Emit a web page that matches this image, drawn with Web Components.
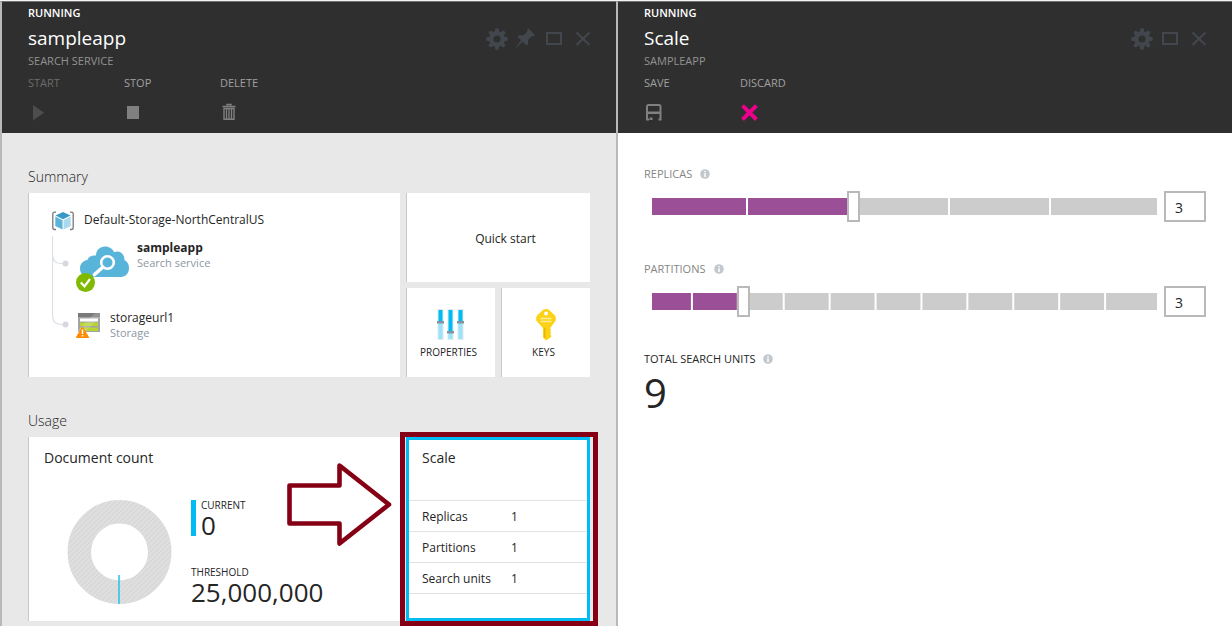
<!DOCTYPE html>
<html lang="en">
<head>
<meta charset="utf-8">
<title>sampleapp - Scale</title>
<style>
  body {
    margin: 0;
    font-family: "Open Sans", "Noto Sans", sans-serif;
    font-size: 12px;
    line-height: 16px;
    color: #252525;
    background: #fff;
  }
</style>
</head>
<body>
<portal-app></portal-app>

<template id="t-app">
  <style>
    :host { display: grid; grid-template-columns: minmax(0, 1fr) minmax(0, 1fr); min-height: 100vh; box-sizing: border-box; border-top: 1px solid #f4f4f4; }
  </style>
  <portal-blade tone="grey">
    <blade-header slot="header" status="Running" heading="sampleapp" subtitle="Search service" tools="gear pin square close">
      <blade-command label="Start" icon="play" disabled></blade-command>
      <blade-command label="Stop" icon="stop"></blade-command>
      <blade-command label="Delete" icon="trash"></blade-command>
    </blade-header>
    <tile-section heading="Summary">
      <portal-tile class="tall"><resource-tree></resource-tree></portal-tile>
      <portal-tile class="wide"><action-tile label="Quick start"></action-tile></portal-tile>
      <portal-tile><action-tile label="Properties" icon="sliders"></action-tile></portal-tile>
      <portal-tile><action-tile label="Keys" icon="key"></action-tile></portal-tile>
    </tile-section>
    <tile-section heading="Usage">
      <portal-tile class="tall"><document-count></document-count></portal-tile>
      <portal-tile class="wide tall" selected><scale-summary></scale-summary></portal-tile>
    </tile-section>
  </portal-blade>
  <portal-blade>
    <blade-header slot="header" status="Running" heading="Scale" subtitle="sampleapp" tools="gear square close">
      <blade-command label="Save" icon="save"></blade-command>
      <blade-command label="Discard" icon="discard"></blade-command>
    </blade-header>
    <scale-form></scale-form>
  </portal-blade>
</template>

<template id="t-blade">
  <style>
    :host { display: flex; flex-direction: column; border-left: 2px solid #b9b9b9; border-top: 1px solid #6c7370; background: #fff; }
    :host([tone="grey"]) { background: #e8e8e8; }
    .body { padding: 0 26px 5px; }
  </style>
  <slot name="header"></slot>
  <div class="body"><slot></slot></div>
</template>

<template id="t-header">
  <style>
    :host { display: block; background: #2f2f2f; padding: 3px 23px 10px 26px; font-size: 11px; text-transform: uppercase; }
    .status { color: #fff; font-weight: 600; }
    .row { display: flex; align-items: center; margin: 3px 0 1px; }
    h1 { flex: 1; margin: 0; color: #fff; font-size: 19px; line-height: 28px; font-weight: 400; text-transform: none; }
    .tools { display: flex; gap: 9px; }
    .tools button { display: block; border: 0; padding: 0; background: none; width: 20px; height: 20px; color: #42474e; }
    .sub { color: #929292; }
    .commands { display: flex; margin-top: 6px; }
  </style>
  <div class="status"></div>
  <div class="row"><h1></h1><div class="tools"></div></div>
  <div class="sub"></div>
  <div class="commands"><slot></slot></div>
</template>

<template id="t-command">
  <style>
    :host { display: block; width: 96px; }
    button { display: block; width: 100%; border: 0; padding: 0; background: none; font: inherit; text-align: left; text-transform: uppercase; color: #a0a0a0; }
    button:disabled { color: #6c6c6c; }
    portal-icon { margin-top: 12px; color: #808080; }
    button:disabled portal-icon { color: #4d4d4d; }
  </style>
  <button type="button"><span></span><portal-icon></portal-icon></button>
</template>

<template id="t-section">
  <style>
    :host { display: block; padding-top: 33px; }
    h2 { margin: 0 0 5px; font-size: 14px; line-height: 22px; font-weight: 300; }
    .grid { display: grid; grid-template-columns: minmax(0, 1fr) 89px 89px; grid-auto-rows: 89px; gap: 6px; }
    ::slotted(.tall) { grid-row: span 2; }
    ::slotted(.wide) { grid-column: span 2; }
  </style>
  <h2></h2>
  <div class="grid"><slot></slot></div>
</template>

<template id="t-tile">
  <style>
    :host { display: block; position: relative; box-sizing: border-box; border-left: 1px solid #c8c8c8; background: #fff; }
    :host([selected]) { border: 3px solid #00bcf2; }
    .frame, .arrow { display: none; position: absolute; pointer-events: none; }
    :host([selected]) .frame { display: block; inset: -8px -11px -8px -9px; border: 5px solid #850014; }
    :host([selected]) .arrow { display: block; right: 195px; top: 22px; }
  </style>
  <slot></slot>
  <div class="frame"></div>
  <svg class="arrow" width="106" height="86" viewBox="0 0 106 86" fill="none" stroke="#850014" stroke-width="4.6" stroke-linejoin="round"><path d="M3.5 23.500H53.500V3.500L103 42.500L53.500 81.500V61.500H3.500Z"/></svg>
</template>

<template id="t-tree">
  <style>
    :host { display: block; padding: 17px 0 0 23px; }
    .root { display: flex; gap: 10px; line-height: 20px; }
    .body { display: flex; gap: 6px; margin-top: 4px; }
    ul { list-style: none; margin: 0; padding: 4px 0 0; display: flex; flex-direction: column; gap: 16px; }
    li { display: flex; gap: 7px; }
    svg { display: block; flex: none; }
    .name { color: #252525; }
    .strong { font-weight: 700; }
    .kind { color: #8d97a3; font-size: 11px; line-height: 14px; }
  </style>
  <div class="root">
    <svg width="22" height="22" viewBox="0 0 22 22">
      <path d="M4 2.200H2.500Q.8 2.200.8 4V17.500Q.8 19.500 2.500 19.500H4M18 2.200H19.500Q21.200 2.200 21.200 4V17.500Q21.200 19.500 19.500 19.500H18" fill="none" stroke="#7a7a7a" stroke-width="1.300"/>
      <path d="M11 2L18.500 5.500L11 9.200L3.500 5.500Z" fill="#3999c6"/>
      <path d="M3.300 6.500L10.500 10.200V19.500L3.300 16Z" fill="#59b4d9"/>
      <path d="M18.700 6.500L11.500 10.200V19.500L18.700 16Z" fill="#a9d9ee"/>
    </svg>
    <span>Default-Storage-NorthCentralUS</span>
  </div>
  <div class="body">
    <svg width="18" height="94" viewBox="0 0 18 94">
      <path d="M.5 0V79Q.5 88.500 9 88.500H12M.5 18Q.5 27.500 9 27.500H12" fill="none" stroke="#dcdfe4" stroke-width="1.200"/>
      <circle cx="13.500" cy="27.500" r="3" fill="#d5d9df"/><circle cx="13.500" cy="88.500" r="3" fill="#d5d9df"/>
    </svg>
    <ul>
      <li>
        <svg width="54" height="54" viewBox="0 0 54 54">
          <path d="M13 37C8 37 4 34 4 28.500C4 24 7 20.500 11.500 20C12.500 17 15 15.500 20 15.600C20 10 24 6.500 29 6.500C33.500 6.500 37 9 38 12.200C43.500 9.800 48.500 13.500 48.500 20C51.500 21.500 53 24.500 53 28C53 33.500 49.500 37 45 37Z" fill="#59b4d9"/>
          <circle cx="31.500" cy="22.500" r="6.300" fill="none" stroke="#fff" stroke-width="2.600"/>
          <path d="M26.500 27.500L18.500 34.500" stroke="#fff" stroke-width="3.600" stroke-linecap="round"/>
          <circle cx="9.500" cy="42.500" r="9.500" fill="#7fba00"/>
          <path d="M4.800 42.500L8.500 46.300L14 39" fill="none" stroke="#fff" stroke-width="2.200"/>
        </svg>
        <div><div class="name strong">sampleapp</div><div class="kind">Search service</div></div>
      </li>
      <li>
        <svg width="27" height="30" viewBox="0 0 27 30">
          <path d="M2 3H24V22H2Z" fill="#a3a3a3"/><path d="M2 3H24V7H2Z" fill="#7a7a7a"/>
          <path d="M4 8.500H22V11.500H4Z" fill="#fff"/><path d="M4 12.500H22V16H4ZM4 17.500H22V21H4Z" fill="#b8d432"/>
          <path d="M24 3V7L9 22H2V20L19 3Z" fill="#fff" opacity=".18"/>
          <path d="M6.500 17L12.700 27.500H.3Z" fill="#ff8c00" stroke="#ff8c00" stroke-linejoin="round"/>
          <path d="M6.500 19.500V24M6.500 25V26.500" stroke="#fff" stroke-width="1.500"/>
        </svg>
        <div><div class="name">storageurl1</div><div class="kind">Storage</div></div>
      </li>
    </ul>
  </div>
</template>

<template id="t-action">
  <style>
    :host { display: block; height: 100%; }
    button { display: flex; flex-direction: column; align-items: center; justify-content: center; width: 100%; height: 100%; border: 0; padding: 2px 0 0 14px; background: none; font: inherit; color: inherit; }
    :host([icon]) button { justify-content: flex-start; gap: 3px; padding: 21px 5px 0 0; font-size: 10px; text-transform: uppercase; }
    portal-icon { margin-left: 5px; }
  </style>
  <button type="button"><portal-icon></portal-icon><span></span></button>
</template>

<template id="t-documents">
  <style>
    :host { display: block; padding: 11px 15px 0; }
    h3 { margin: 0; font-size: 14px; line-height: 20px; font-weight: 400; }
    .row { display: flex; gap: 19px; padding: 32px 0 0 23px; }
    dl { margin: 0; display: flex; flex-direction: column; gap: 31px; }
    dl div { display: flex; flex-direction: column; }
    .current { border-left: 5px solid #00bcf2; padding-left: 5px; height: 36px; }
    dt { font-size: 10px; line-height: 10px; text-transform: uppercase; }
    dd { margin: 0; font-size: 26px; line-height: 30px; font-weight: 500; }
  </style>
  <h3>Document count</h3>
  <div class="row">
    <svg width="105" height="105" viewBox="0 0 105 105">
      <defs><pattern id="hatch" width="5" height="5" patternUnits="userSpaceOnUse"><rect width="5" height="5" fill="#dedede"/><path d="M-1 1L1 -1M0 5L5 0M4 6L6 4" stroke="#d3d3d3" stroke-width="1"/></pattern></defs>
      <circle cx="52.500" cy="52" r="40.200" fill="none" stroke="url(#hatch)" stroke-width="23.500"/>
      <path d="M52 75V104" stroke="#2cc4ef" stroke-width="1.600"/>
    </svg>
    <dl>
      <div class="current"><dt>Current</dt><dd>0</dd></div>
      <div><dt>Threshold</dt><dd>25,000,000</dd></div>
    </dl>
  </div>
</template>

<template id="t-scale-summary">
  <style>
    :host { display: block; padding-top: 8px; }
    h3 { margin: 0 0 32px 13px; font-size: 14px; line-height: 20px; font-weight: 400; }
    table { width: 100%; border-collapse: separate; border-spacing: 0; border-bottom: 1px solid #e2e2e2; }
    th, td { height: 28px; padding: 2px 0 0; border-top: 1px solid #e2e2e2; font-weight: 400; text-align: left; }
    th { width: 89px; padding-left: 13px; }
  </style>
  <h3>Scale</h3>
  <table>
    <tr><th scope="row">Replicas</th><td>1</td></tr>
    <tr><th scope="row">Partitions</th><td>1</td></tr>
    <tr><th scope="row">Search units</th><td>1</td></tr>
  </table>
</template>

<template id="t-scale-form">
  <style>
    :host { display: block; padding-top: 33px; }
    scale-slider { margin-bottom: 39px; }
    .total { display: flex; align-items: center; gap: 8px; margin-top: -5px; font-size: 11px; text-transform: uppercase; }
    output { display: block; margin-top: 4px; font-size: 40px; line-height: 44px; }
  </style>
  <scale-slider label="Replicas" max="6" value="3"></scale-slider>
  <scale-slider label="Partitions" max="12" value="3"></scale-slider>
  <div class="total"><label for="units">Total search units</label><portal-icon name="info"></portal-icon></div>
  <output id="units">9</output>
</template>

<template id="t-slider">
  <style>
    :host { display: block; }
    .label { display: flex; align-items: center; gap: 8px; font-size: 11px; color: #858585; text-transform: uppercase; }
    .row { display: flex; gap: 7px; margin-top: 9px; padding-left: 8px; }
    .slider { flex: 1; display: grid; align-items: center; }
    .track, input[type="range"] { grid-area: 1 / 1; }
    .track {
      height: 17px;
      background:
        linear-gradient(#ccc, #ccc) right / 20px 100% no-repeat,
        linear-gradient(to right, transparent calc(100% - 7px), #fff calc(100% - 7px) calc(100% - 5px), transparent calc(100% - 5px)) left / calc(100% / var(--steps)) 100%,
        linear-gradient(#9b4f96, #9b4f96) left / var(--fill) 100% no-repeat,
        #ccc;
    }
    input { box-sizing: border-box; font: inherit; color: inherit; }
    input[type="range"] { appearance: none; width: calc(100% + 13px); height: 31px; margin: 0 -6px 0 -7px; background: none; }
    input[type="range"]::-webkit-slider-thumb { appearance: none; width: 13px; height: 31px; border: 2px solid #b9b9b9; border-radius: 0; background: #fff; }
    input[type="number"] { appearance: textfield; width: 42px; height: 31px; border: 2px solid #b9b9b9; padding: 1px 8px 0 9px; font-size: 14px; background: #fff; }
    input[type="number"]::-webkit-inner-spin-button { appearance: none; margin: 0; }
  </style>
  <div class="label"><label for="range"></label><portal-icon name="info"></portal-icon></div>
  <div class="row">
    <div class="slider"><div class="track"></div><input id="range" type="range" min="1"></div>
    <input id="number" type="number" min="1">
  </div>
</template>

<script>
  const ICONS = {
    gear: [20, 20, '<g fill="currentColor"><path fill-rule="evenodd" d="M11 3.200A7.800 7.800 0 1 1 11 18.800A7.800 7.800 0 1 1 11 3.200ZM11 7.400A3.600 3.600 0 1 0 11 14.600A3.600 3.600 0 1 0 11 7.400Z"/>' +
      [0, 45, 90, 135, 180, 225, 270, 315].map(a => `<path transform="rotate(${a} 11 11)" d="M8.600 4.500L9.300 .6Q11 -.3 12.700 .6L13.400 4.500Z"/>`).join('') + '</g>'],
    pin: [20, 20, '<path d="M13.500 .5L20 7.200L18.500 8.500L17 8L13 12L13 16L11.500 17.500L7.500 13.500L.8 20.500L.5 20.200L6 12L2.500 8.600L4.200 7.200L8.500 7.300L12.500 3.500L12.100 1.800Z" fill="currentColor"/>'],
    square: [20, 20, '<path d="M3 5H17V16H3Z" fill="none" stroke="currentColor" stroke-width="2"/>'],
    close: [20, 20, '<path d="M3.500 4.500L16.500 17M16.500 4.500L3.500 17" stroke="currentColor" stroke-width="2"/>'],
    play: [20, 20, '<path d="M5 2L16 9.700L5 17.500Z" fill="currentColor"/>'],
    stop: [20, 20, '<path d="M3 3H15V16H3Z" fill="currentColor"/>'],
    trash: [20, 20, '<path d="M7 2.500V1.500H11V2.500M2.500 3.500H15.500M4 5.500V16.300H14V5.500Z" fill="none" stroke="currentColor" stroke-width="1.400"/><path d="M6.500 6V16M9 6V16M11.500 6V16" stroke="currentColor" stroke-width="1.300"/>'],
    save: [20, 20, '<path d="M5 16.500H3V3.500Q3 2 4.500 2H15Q16.500 2 16.500 3.500V16.500H14.500" fill="none" stroke="currentColor" stroke-width="2"/><path d="M3 8.500H16.500V11H3ZM5.500 14.500H8.500V17H5.500Z" fill="currentColor"/>'],
    discard: [20, 20, '<path d="M2.500 2.700L16.500 16.500M16.500 2.700L2.500 16.500" stroke="#ec008c" stroke-width="4"/>'],
    info: [10, 10, '<circle cx="5" cy="5" r="4.800" fill="#c3c8ce"/><path d="M5 4.200V8M5 2V3.300" stroke="#fff" stroke-width="1.500"/>'],
    sliders: [28, 32, [0, 10, 20].map((x, i) => { const y = i === 1 ? 23 : 13; return `<path d="M${x + .5} 0H${x + 6.500}V31H${x + .5}Z" fill="#e3e8ea"/><path d="M${x + 1.500} 1H${x + 5.500}V${y}H${x + 1.500}Z" fill="#00bcf2"/><path d="M${x + 1.500} ${y}H${x + 5.500}V30H${x + 1.500}Z" fill="#99e4fa"/><path d="M${x} ${y - 1}H${x + 7}V${y + 1.500}H${x}Z" fill="#8494a0"/>`; }).join('')],
    key: [22, 32, '<path fill-rule="evenodd" d="M8.500 .6Q11 -.6 13.500 .6L20 6.500Q21.700 9 20.500 12L15.200 19V20L16.200 21L15.200 22.200L16.200 23.500L15.200 25L16.200 26.500V28L11 31.500L8 28.500V19L1.500 12Q.3 9 2 6.500ZM11 2.500A2 2 0 1 0 11 6.500A2 2 0 1 0 11 2.500Z" fill="#fcd116"/><path d="M5.500 9.500H16.500M5.500 12.500H16.500" stroke="#fff0a0" stroke-width="1.700"/><path d="M9.800 19V29" stroke="#eab300" stroke-width="1.400"/>']
  };

  class Base extends HTMLElement {
    connectedCallback() {
      if (this.shadowRoot) return;
      const root = this.attachShadow({ mode: 'open' });
      root.append(document.getElementById(this.constructor.template).content.cloneNode(true));
      this.ready(root);
    }
    attr(name) { return this.getAttribute(name) || ''; }
    ready() {}
  }
  const define = (tag, template, ready) => customElements.define(tag, class extends Base {
    static template = template;
    ready(root) { if (ready) ready(this, root); }
  });

  customElements.define('portal-icon', class extends HTMLElement {
    static observedAttributes = ['name'];
    constructor() { super(); this.attachShadow({ mode: 'open' }); }
    attributeChangedCallback() {
      const [w, h, art] = ICONS[this.getAttribute('name')];
      this.shadowRoot.innerHTML = `<style>:host{display:block;flex:none}svg{display:block;overflow:visible}</style><svg width="${w}" height="${h}" viewBox="0 0 ${w} ${h}" aria-hidden="true">${art}</svg>`;
    }
  });

  define('blade-header', 't-header', (el, root) => {
    root.querySelector('.status').textContent = el.attr('status');
    root.querySelector('h1').textContent = el.attr('heading');
    root.querySelector('.sub').textContent = el.attr('subtitle');
    for (const name of el.attr('tools').split(' ')) {
      const button = document.createElement('button');
      button.type = 'button';
      button.setAttribute('aria-label', name);
      const icon = document.createElement('portal-icon');
      icon.setAttribute('name', name);
      button.append(icon);
      root.querySelector('.tools').append(button);
    }
  });
  define('blade-command', 't-command', (el, root) => {
    root.querySelector('span').textContent = el.attr('label');
    root.querySelector('portal-icon').setAttribute('name', el.attr('icon'));
    root.querySelector('button').disabled = el.hasAttribute('disabled');
  });
  define('tile-section', 't-section', (el, root) => { root.querySelector('h2').textContent = el.attr('heading'); });
  define('portal-tile', 't-tile');
  define('resource-tree', 't-tree');
  define('action-tile', 't-action', (el, root) => {
    root.querySelector('span').textContent = el.attr('label');
    const icon = root.querySelector('portal-icon');
    if (el.hasAttribute('icon')) icon.setAttribute('name', el.attr('icon')); else icon.remove();
  });
  define('document-count', 't-documents');
  define('scale-summary', 't-scale-summary');
  define('scale-slider', 't-slider', (el, root) => {
    const range = root.getElementById('range'), number = root.getElementById('number');
    const max = Number(el.attr('max'));
    root.querySelector('label').textContent = el.attr('label');
    number.setAttribute('aria-label', el.attr('label'));
    range.max = number.max = max;
    el.style.setProperty('--steps', max - 1);
    const update = value => {
      range.value = number.value = el.value = Number(value);
      el.style.setProperty('--fill', (el.value - 1) / (max - 1) * 100 + '%');
    };
    update(el.attr('value'));
    for (const input of [range, number]) input.addEventListener('input', () => {
      update(input.value);
      el.dispatchEvent(new Event('scale-change', { bubbles: true }));
    });
  });
  define('scale-form', 't-scale-form', (el, root) => {
    root.addEventListener('scale-change', () => {
      const [replicas, partitions] = root.querySelectorAll('scale-slider');
      root.getElementById('units').value = replicas.value * partitions.value;
    });
  });
  define('portal-blade', 't-blade');
  define('portal-app', 't-app');
</script>
</body>
</html>
